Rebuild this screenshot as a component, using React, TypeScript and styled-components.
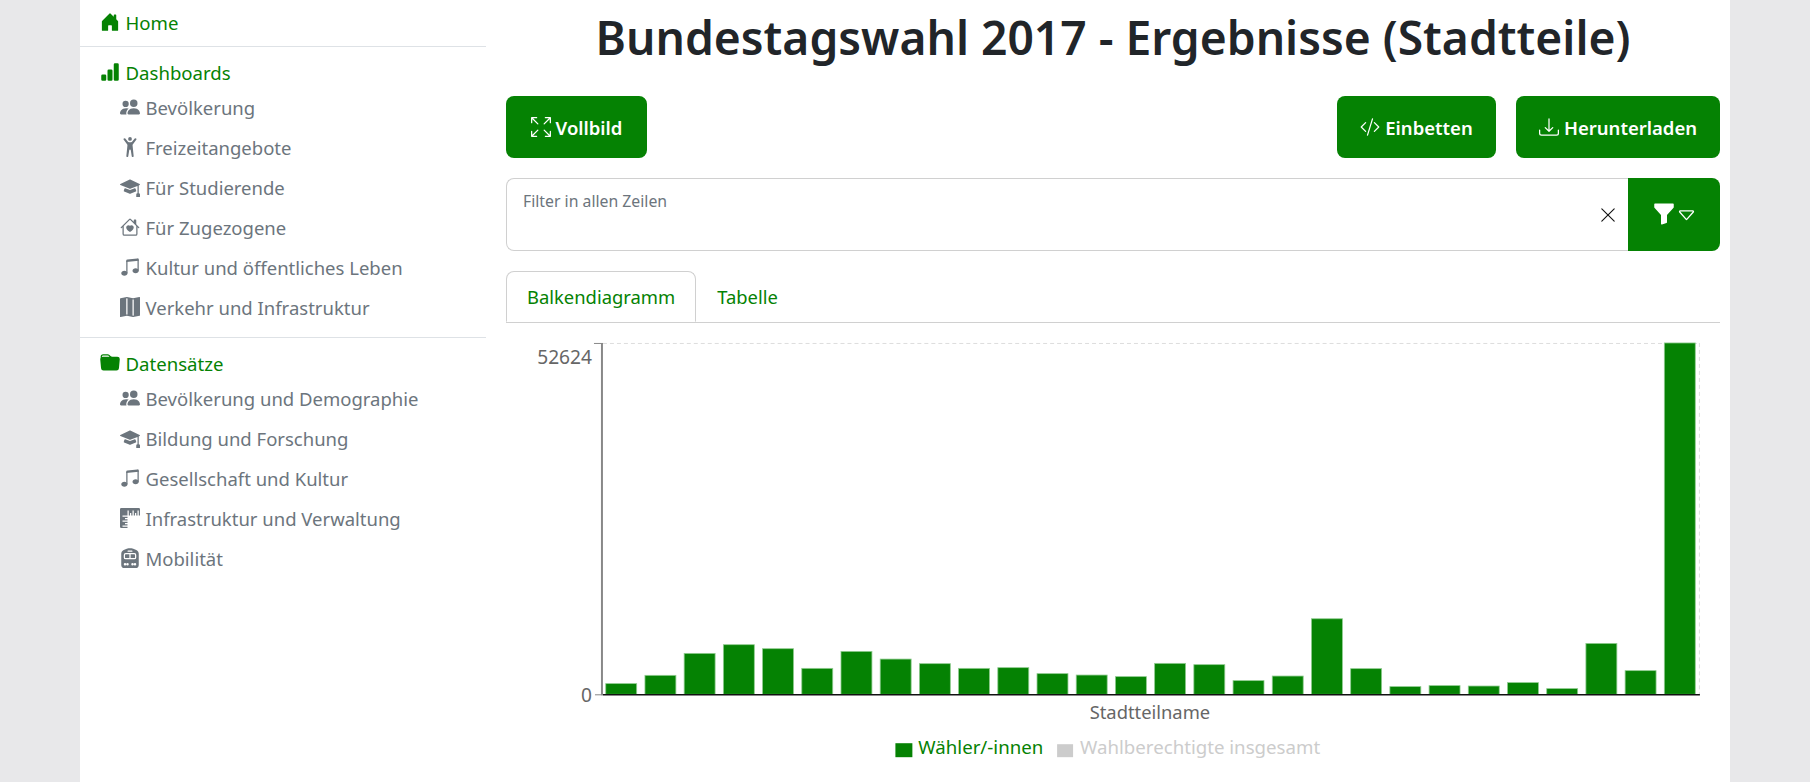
import React from 'react';
import styled, { createGlobalStyle } from 'styled-components';
import {
  BsArrowsFullscreen,
  BsBarChartFill,
  BsCaretDown,
  BsCodeSlash,
  BsDownload,
  BsFolderFill,
  BsFunnelFill,
  BsHouseDoorFill,
  BsHouseHeart,
  BsMapFill,
  BsMortarboardFill,
  BsMusicNoteBeamed,
  BsPeopleFill,
  BsPersonArmsUp,
  BsRulers,
  BsTrainFrontFill,
  BsXLg,
} from 'react-icons/bs';

const GREEN = '#058203';
const FONT = '"Noto Sans", "Open Sans", sans-serif';

const GlobalStyle = createGlobalStyle`
  html, body {
    margin: 0;
    height: 100%;
    overflow: hidden;
    background-color: #e8e8ea;
    font-family: ${FONT};
  }
`;

const Page = styled.div`
  height: 782px;
  display: flex;
  justify-content: center;
`;

const Shell = styled.div`
  width: 1650px;
  height: 100%;
  background-color: white;
  display: flex;
`;

const Sidebar = styled.nav`
  width: 406px;
  flex-shrink: 0;
`;

const Section = styled.div`
  padding: ${(props: { $top: number; $bottom: number }) => `${props.$top}px 0 ${props.$bottom}px`};
  border-bottom: 1px solid #dee2e6;
  &:last-child {
    border-bottom: none;
  }
`;

const Head = styled.div`
  display: flex;
  align-items: center;
  height: 24px;
  padding-left: 20px;
  gap: 5.5px;
  color: ${GREEN};
  font-size: 18.6px;
  svg {
    width: 20px;
    height: 20px;
  }
`;

const Item = styled.div`
  display: flex;
  align-items: center;
  height: 40px;
  padding-left: 40px;
  gap: 5.5px;
  color: #6c757d;
  font-size: 18.5px;
  svg {
    width: 20px;
    height: 20px;
    flex-shrink: 0;
  }
`;

const Items = styled.div`
  margin-top: 3px;
`;

const Main = styled.main`
  flex: 1;
  min-width: 0;
  padding: 0 10px 0 20px;
  display: flex;
  flex-direction: column;
`;

const Title = styled.h1`
  margin: 0;
  height: 76px;
  line-height: 76px;
  text-align: center;
  font-size: 46.2px;
  font-weight: 600;
  color: #212529;
  margin-bottom: 20px;
`;

const Toolbar = styled.div`
  display: flex;
  gap: 20px;
`;

const Spacer = styled.div`
  flex: 1;
`;

const Button = styled.button`
  height: 62px;
  border: none;
  border-radius: 8px;
  background-color: ${GREEN};
  color: white;
  font-family: ${FONT};
  font-size: 18.5px;
  font-weight: 600;
  display: flex;
  align-items: center;
  justify-content: center;
  gap: 5px;
  width: ${(props: { $width: number }) => props.$width}px;
  padding: 0;
  svg {
    width: 20px;
    height: 20px;
  }
`;

const FilterRow = styled.div`
  display: flex;
  height: 73px;
  margin-top: 20px;
`;

const FilterBox = styled.div`
  flex: 1;
  border: 1px solid #d0d0d0;
  border-right: none;
  border-radius: 8px 0 0 8px;
  padding: 11px 8px 0 16px;
  color: #6c757d;
  font-size: 15.8px;
  position: relative;
`;

const ClearIcon = styled(BsXLg)`
  position: absolute;
  right: 11px;
  top: 27px;
  width: 18px;
  height: 18px;
  color: #111;
`;

const FilterButton = styled.button`
  width: 92px;
  border: none;
  border-radius: 0 8px 8px 0;
  background-color: ${GREEN};
  color: white;
  display: flex;
  align-items: center;
  justify-content: center;
  padding: 0;
`;

const FunnelIcon = styled(BsFunnelFill)`
  width: 24px;
  height: 24px;
`;

const CaretIcon = styled(BsCaretDown)`
  width: 21px;
  height: 21px;
  margin-top: 2px;
`;

const Tabs = styled.div`
  display: flex;
  margin-top: 20px;
  height: 51px;
  border-bottom: 1px solid #d0d0d0;
`;

const Tab = styled.div`
  height: 51px;
  box-sizing: border-box;
  padding: 0 20px;
  display: flex;
  align-items: center;
  color: ${GREEN};
  font-size: 18.4px;
  border: 1px solid ${(props: { $active?: boolean }) => (props.$active ? '#d0d0d0' : 'transparent')};
  border-bottom: ${(props: { $active?: boolean }) => (props.$active ? '1px solid white' : 'none')};
  border-radius: 8px 8px 0 0;
  background-color: white;
`;

const ChartSvg = styled.svg`
  display: block;
  font-family: ${FONT};
`;

const navDashboards = [
  { icon: <BsPeopleFill />, label: 'Bevölkerung' },
  { icon: <BsPersonArmsUp />, label: 'Freizeitangebote' },
  { icon: <BsMortarboardFill />, label: 'Für Studierende' },
  { icon: <BsHouseHeart />, label: 'Für Zugezogene' },
  { icon: <BsMusicNoteBeamed />, label: 'Kultur und öffentliches Leben' },
  { icon: <BsMapFill />, label: 'Verkehr und Infrastruktur' },
];

const navData = [
  { icon: <BsPeopleFill />, label: 'Bevölkerung und Demographie' },
  { icon: <BsMortarboardFill />, label: 'Bildung und Forschung' },
  { icon: <BsMusicNoteBeamed />, label: 'Gesellschaft und Kultur' },
  { icon: <BsRulers />, label: 'Infrastruktur und Verwaltung' },
  { icon: <BsTrainFrontFill />, label: 'Mobilität' },
];

// y of each bar's top edge in page pixels, read off the picture
const barTops = [
  683.3, 675, 653, 644.3, 648.3, 668, 651, 658.7, 663.3, 668, 667.3, 673.3, 674.7, 676.3, 663, 664.3,
  680.3, 675.7, 618.3, 668.3, 686.3, 685.3, 685.7, 682.3, 688.3, 643, 670.3, 342,
];

const CHART_LEFT = 506;
const CHART_TOP = 322;

const Chart = () => (
  <ChartSvg width={1214} height={460} viewBox={`${CHART_LEFT} ${CHART_TOP} 1214 460`}>
    <line x1={602} y1={342.5} x2={1700} y2={342.5} stroke="#ddd" strokeDasharray="4 3" />
    <line x1={1700.5} y1={342} x2={1700.5} y2={694} stroke="#ddd" strokeDasharray="4 3" />
    {barTops.map((top, index) => (
      <rect
        key={index}
        x={604.8 + index * 39.28}
        y={top}
        width={31}
        height={694 - top}
        fill={GREEN}
        stroke="#8fcb8f"
        strokeWidth={0.8}
      />
    ))}
    <line x1={593} y1={342.5} x2={602} y2={342.5} stroke="#888" strokeWidth={1} />
    <line x1={594} y1={694.5} x2={602} y2={694.5} stroke="#888" strokeWidth={1} />
    <line x1={601} y1={342} x2={601} y2={695} stroke="#888" strokeWidth={2} />
    <line x1={602} y1={694.5} x2={1701} y2={694.5} stroke="#111" strokeWidth={1.6} />
    <text x={591} y={363} textAnchor="end" fontSize={19.2} fill="#666">
      52624
    </text>
    <text x={591} y={702} textAnchor="end" fontSize={19.2} fill="#666">
      0
    </text>
    <text x={1150} y={719} textAnchor="middle" fontSize={18.4} fill="#666">
      Stadtteilname
    </text>
    <rect x={895} y={743} width={17} height={14} fill={GREEN} />
    <text x={918} y={754} fontSize={18.7} fill={GREEN}>
      Wähler/-innen
    </text>
    <rect x={1057} y={744} width={16} height={13} fill="#ccc" />
    <text x={1080} y={754} fontSize={18.7} fill="#ccc">
      Wahlberechtigte insgesamt
    </text>
  </ChartSvg>
);

const App = () => (
  <Page>
    <GlobalStyle />
    <Shell>
      <Sidebar>
        <Section $top={10} $bottom={12}>
          <Head>
            <BsHouseDoorFill />
            Home
          </Head>
        </Section>
        <Section $top={13} $bottom={10}>
          <Head>
            <BsBarChartFill />
            Dashboards
          </Head>
          <Items>
            {navDashboards.map((item) => (
              <Item key={item.label}>
                {item.icon}
                {item.label}
              </Item>
            ))}
          </Items>
        </Section>
        <Section $top={13} $bottom={0}>
          <Head>
            <BsFolderFill />
            Datensätze
          </Head>
          <Items>
            {navData.map((item) => (
              <Item key={item.label}>
                {item.icon}
                {item.label}
              </Item>
            ))}
          </Items>
        </Section>
      </Sidebar>
      <Main>
        <Title>Bundestagswahl 2017 - Ergebnisse (Stadtteile)</Title>
        <Toolbar>
          <Button $width={141}>
            <BsArrowsFullscreen />
            Vollbild
          </Button>
          <Spacer />
          <Button $width={159}>
            <BsCodeSlash />
            Einbetten
          </Button>
          <Button $width={204}>
            <BsDownload />
            Herunterladen
          </Button>
        </Toolbar>
        <FilterRow>
          <FilterBox>
            Filter in allen Zeilen
            <ClearIcon />
          </FilterBox>
          <FilterButton>
            <FunnelIcon />
            <CaretIcon />
          </FilterButton>
        </FilterRow>
        <Tabs>
          <Tab $active>Balkendiagramm</Tab>
          <Tab>Tabelle</Tab>
        </Tabs>
        <Chart />
      </Main>
    </Shell>
  </Page>
);

export default App;
